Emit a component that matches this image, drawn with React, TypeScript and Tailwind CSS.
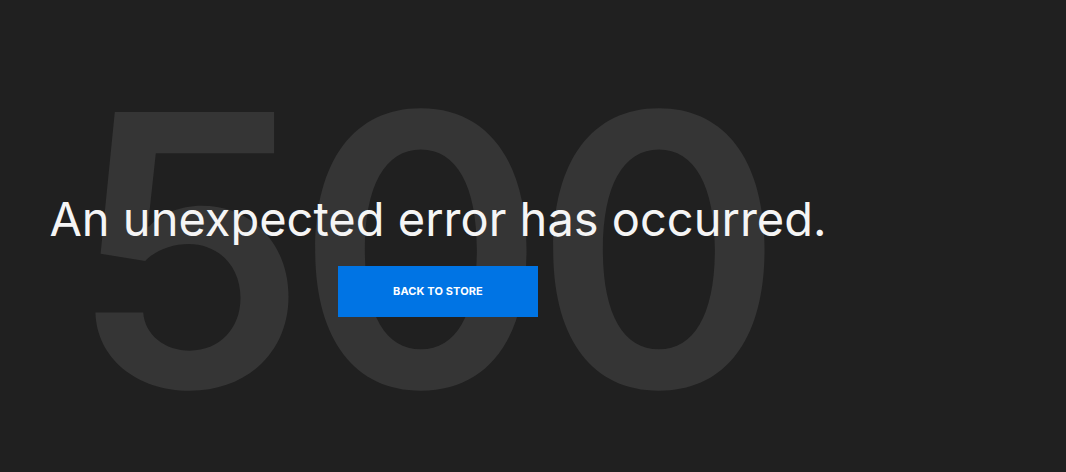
export default function App() {
  return (
    <div className="min-h-[472px] w-full bg-[#202020] overflow-hidden" style={{ fontFamily: "Inter, 'Noto Sans', sans-serif" }}>
      <div className="relative w-[876px] h-[472px]">
        <div
          aria-hidden
          className="absolute left-0 right-0 top-[61px] pr-[34px] text-center text-[378px] leading-none font-semibold tracking-[-0.03em] text-[#353535] select-none"
        >
          500
        </div>
        <div className="relative flex flex-col items-center pt-[189px]">
          <h1 className="text-[47px] leading-[60px] font-normal text-[#f5f5f5]">
            An unexpected error has occurred.
          </h1>
          <a
            href="#"
            className="mt-[17px] flex h-[51px] w-[200px] items-center justify-center bg-[#0074e4] text-[11px] font-bold uppercase tracking-[0.01em] text-white"
          >
            Back to store
          </a>
        </div>
      </div>
    </div>
  );
}
